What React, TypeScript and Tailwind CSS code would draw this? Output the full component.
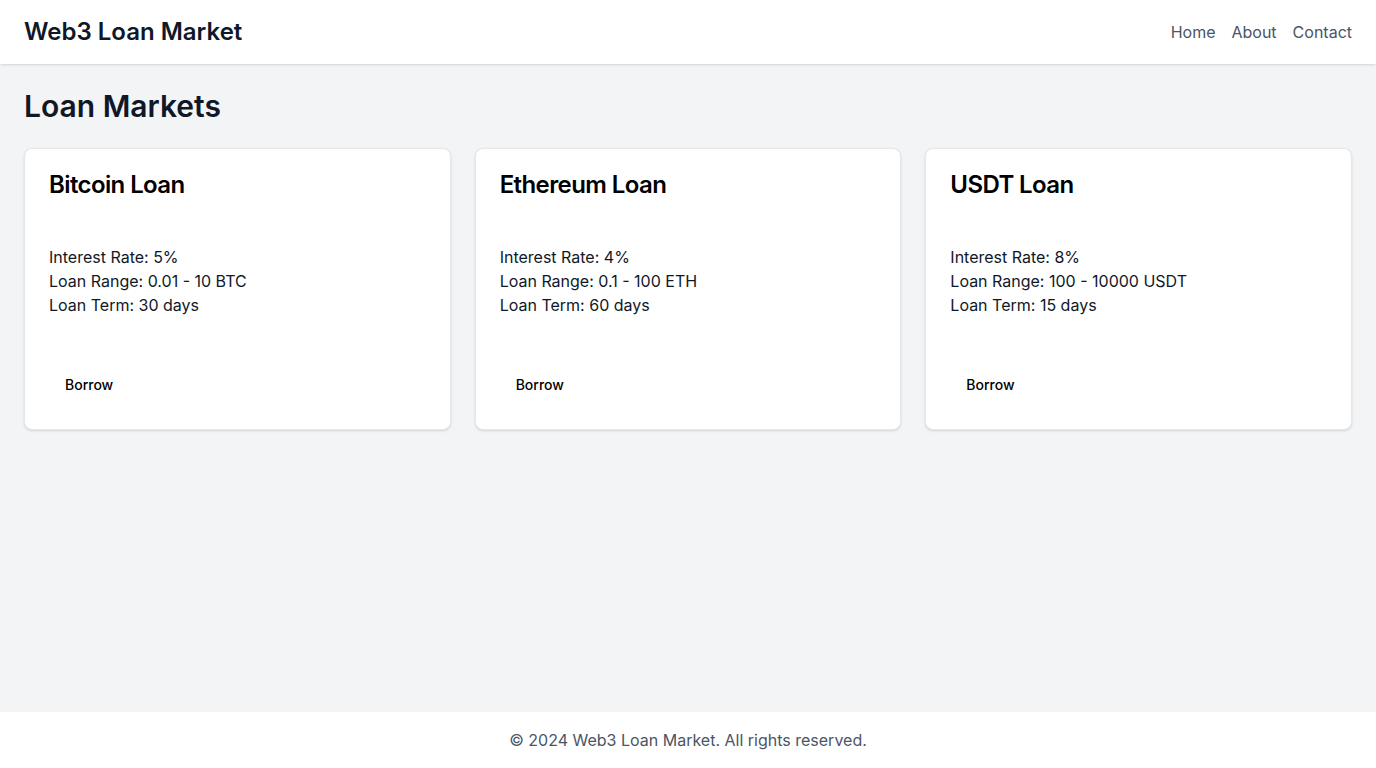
import React from 'react';

const markets = [
  { name: 'Bitcoin Loan', rate: '5%', range: '0.01 - 10 BTC', term: '30 days' },
  { name: 'Ethereum Loan', rate: '4%', range: '0.1 - 100 ETH', term: '60 days' },
  { name: 'USDT Loan', rate: '8%', range: '100 - 10000 USDT', term: '15 days' },
];

export default function App() {
  return (
    <div className="min-h-screen flex flex-col bg-gray-100 font-['Inter',sans-serif]">
      <header className="h-16 bg-white shadow flex items-center justify-between px-6 relative z-10">
        <h1 className="text-2xl font-semibold text-gray-900">Web3 Loan Market</h1>
        <nav className="flex gap-4 text-gray-600">
          <a href="#">Home</a>
          <a href="#">About</a>
          <a href="#">Contact</a>
        </nav>
      </header>

      <main className="flex-1 p-6">
        <h2 className="text-3xl font-semibold text-gray-900 mb-6">Loan Markets</h2>
        <div className="grid grid-cols-3 gap-6">
          {markets.map((m) => (
            <div key={m.name} className="bg-white rounded-lg border border-gray-200 shadow-sm">
              <div className="p-6">
                <h3 className="text-2xl font-semibold leading-none tracking-tight text-black">{m.name}</h3>
              </div>
              <div className="px-6 py-6 text-gray-900">
                <p>Interest Rate: {m.rate}</p>
                <p>Loan Range: {m.range}</p>
                <p>Loan Term: {m.term}</p>
              </div>
              <div className="p-6">
                <button className="h-10 px-4 rounded-md text-sm font-medium text-black hover:bg-gray-100">
                  Borrow
                </button>
              </div>
            </div>
          ))}
        </div>
      </main>

      <footer className="bg-white border-t border-gray-100 py-4 text-center text-gray-600">
        © 2024 Web3 Loan Market. All rights reserved.
      </footer>
    </div>
  );
}
